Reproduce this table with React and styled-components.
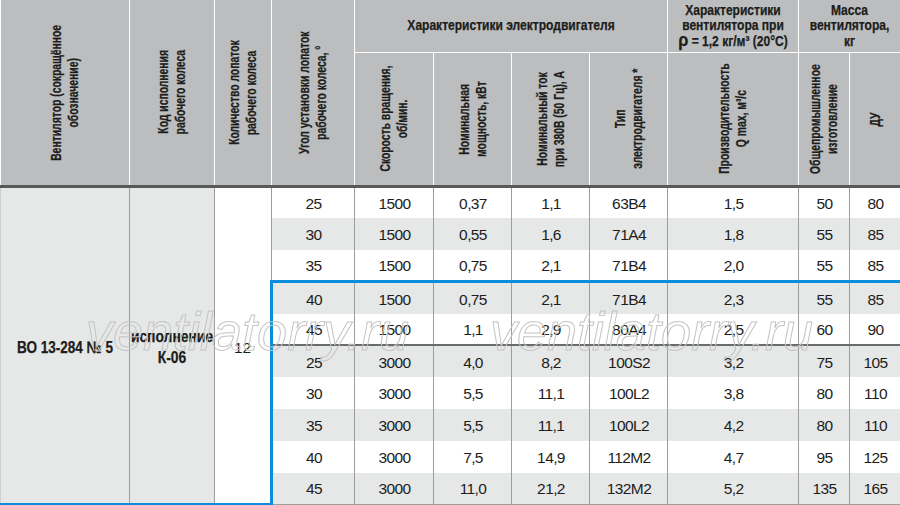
import React from 'react';
import styled, { createGlobalStyle } from 'styled-components';

const GlobalStyle = createGlobalStyle`
  html, body { margin: 0; padding: 0; background: #fff; }
  body { width: 900px; height: 505px; overflow: hidden; }
`;

const Page = styled.div`
  position: relative;
  width: 900px;
  height: 505px;
  overflow: hidden;
  color: #1d1d1b;
  font-family: "Liberation Sans", Arial, sans-serif;
`;

const Table = styled.table`
  width: 900px;
  table-layout: fixed;
  border-collapse: collapse;
`;

const HeadCell = styled.th`
  background: #bcbdbf;
  border: 1px solid #fff;
  border-top: none;
  padding: 0;
  font-weight: 700;
  font-size: 14px;
  line-height: 15.5px;
  text-align: center;
  vertical-align: middle;
  white-space: nowrap;
  overflow: hidden;
  -webkit-text-stroke: 0.25px #1d1d1b;
  height: ${p => p.$h || 'auto'};
  &:first-child { border-left: none; }
  ${p => p.$edge && 'border-bottom: 3px solid #58595b;'}
`;

/* condensed look: the font is squeezed along the reading direction */
const Squeeze = styled.span`
  display: block;
  margin: 0 -60px;
  text-align: center;
  transform: scaleX(${p => p.$sx || 0.86});
  white-space: nowrap;
`;

const VertBox = styled.div`
  height: ${p => p.$h}px;
  display: flex;
  align-items: center;
  justify-content: center;
`;

const Vert = styled.div`
  flex: none;
  writing-mode: vertical-rl;
  transform: rotate(180deg) scaleY(0.74);
  white-space: nowrap;
  text-align: center;
  font-size: 14px;
  line-height: 17px;
`;

const Rho = styled.span`
  font-size: 19px;
  line-height: 10px;
`;

const Row = styled.tr`
  height: 31.8px;
  background: ${p => (p.$shade ? '#e6e7e7' : '#fff')};
`;

const Cell = styled.td`
  padding: 2px 0 0 1px;
  text-align: center;
  vertical-align: middle;
  border-left: 1px solid #9d9d9d;
  border-right: 1px solid #9d9d9d;
  font-size: 15.5px;
  letter-spacing: -0.6px;
  ${p => p.$blueTop && 'border-top: 3px solid #0a8ddb;'}
  ${p => p.$darkTop && 'border-top: 2px solid #6a6b6d;'}
  ${p => p.$blueLeft && 'border-left: 3px solid #0a8ddb;'}
  ${p => p.$last && 'border-bottom: 1px solid #9d9d9d;'}
`;

const MergedCell = styled.td`
  padding: 4px 0 0;
  text-align: center;
  vertical-align: middle;
  overflow: hidden;
  background: ${p => (p.$white ? '#fff' : '#e6e7e7')};
  border-left: 1px solid #9d9d9d;
  border-right: 1px solid #9d9d9d;
  border-bottom: 3px solid #0a8ddb;
  font-size: ${p => (p.$plain ? '15.5px' : '16.5px')};
  font-weight: ${p => (p.$plain ? 400 : 700)};
  line-height: 21px;
  ${p => !p.$plain && '-webkit-text-stroke: 0.25px #1d1d1b;'}
  &:first-child { border-left: 1px solid #d0d0d0; }
`;

const Watermark = styled.span`
  position: absolute;
  top: 304px;
  left: ${p => p.$left}px;
  font-style: italic;
  font-size: 54px;
  line-height: 54px;
  color: transparent;
  -webkit-text-stroke: 1px #c4c4c4;
  white-space: nowrap;
  pointer-events: none;
`;

const widths = [129, 85, 57, 83, 79, 78, 78, 78, 131, 51, 51];

const rows = [
  ['25', '1500', '0,37', '1,1', '63В4', '1,5', '50', '80'],
  ['30', '1500', '0,55', '1,6', '71А4', '1,8', '55', '85'],
  ['35', '1500', '0,75', '2,1', '71В4', '2,0', '55', '85'],
  ['40', '1500', '0,75', '2,1', '71В4', '2,3', '55', '85'],
  ['45', '1500', '1,1', '2,9', '80А4', '2,5', '60', '90'],
  ['25', '3000', '4,0', '8,2', '100S2', '3,2', '75', '105'],
  ['30', '3000', '5,5', '11,1', '100L2', '3,8', '80', '110'],
  ['35', '3000', '5,5', '11,1', '100L2', '4,2', '80', '110'],
  ['40', '3000', '7,5', '14,9', '112M2', '4,7', '95', '125'],
  ['45', '3000', '11,0', '21,2', '132M2', '5,2', '135', '165'],
];

const sideHeads = [
  ['Вентилятор (сокращённое', 'обозначение)'],
  ['Код исполнения', 'рабочего колеса'],
  ['Количество лопаток', 'рабочего колеса'],
  ['Угол установки лопаток', 'рабочего колеса, °'],
];

const subHeads = [
  ['Скорость вращения,', 'об/мин.'],
  ['Номинальная', 'мощность, кВт'],
  ['Номинальный ток', 'при 380В (50 Гц), А'],
  ['Тип', 'электродвигателя *'],
  ['Производительность', 'Q max, м³/с'],
  ['Общепромышленное', 'изготовление'],
  ['ДУ'],
];

const Lines = ({ lines, h }) => (
  <VertBox $h={h}>
    <Vert>
      {lines.map((l, i) => (
        <React.Fragment key={i}>
          {i > 0 && <br />}
          {l}
        </React.Fragment>
      ))}
    </Vert>
  </VertBox>
);

const App = () => {
  return (
    <Page>
      <GlobalStyle />
      <Table>
        <colgroup>
          {widths.map((w, i) => <col key={i} style={{ width: w }} />)}
        </colgroup>
        <thead>
          <tr>
            {sideHeads.map((h, i) => (
              <HeadCell key={i} rowSpan={2} $edge>
                <Lines lines={h} h={150} />
              </HeadCell>
            ))}
            <HeadCell colSpan={4} $h="52px">
              <Squeeze>Характеристики электродвигателя</Squeeze>
            </HeadCell>
            <HeadCell>
              <Squeeze>
                Характеристики<br />вентилятора при<br />
                <Rho>ρ</Rho> = 1,2 кг/м³ (20°С)
              </Squeeze>
            </HeadCell>
            <HeadCell colSpan={2}>
              <Squeeze>Масса<br />вентилятора,<br />кг</Squeeze>
            </HeadCell>
          </tr>
          <tr>
            {subHeads.map((h, i) => (
              <HeadCell key={i} $edge $h="132px">
                <Lines lines={h} h={110} />
              </HeadCell>
            ))}
          </tr>
        </thead>
        <tbody>
          {rows.map((r, i) => (
            <Row key={i} $shade={i % 2 === 1}>
              {i === 0 && (
                <>
                  <MergedCell rowSpan={10}>
                    <Squeeze $sx={0.82}>ВО 13-284 № 5</Squeeze>
                  </MergedCell>
                  <MergedCell rowSpan={10}>
                    <Squeeze $sx={0.84}>исполнение<br />К-06</Squeeze>
                  </MergedCell>
                  <MergedCell rowSpan={10} $white $plain>12</MergedCell>
                </>
              )}
              {r.map((v, j) => (
                <Cell
                  key={j}
                  $blueTop={i === 3}
                  $darkTop={i === 5}
                  $blueLeft={j === 0 && i >= 3}
                  $last={i === 9}
                >
                  {v}
                </Cell>
              ))}
            </Row>
          ))}
        </tbody>
      </Table>
      <Watermark $left={86}>ventilatorry.ru</Watermark>
      <Watermark $left={490}>ventilatorry.ru</Watermark>
    </Page>
  );
};

export default App;
